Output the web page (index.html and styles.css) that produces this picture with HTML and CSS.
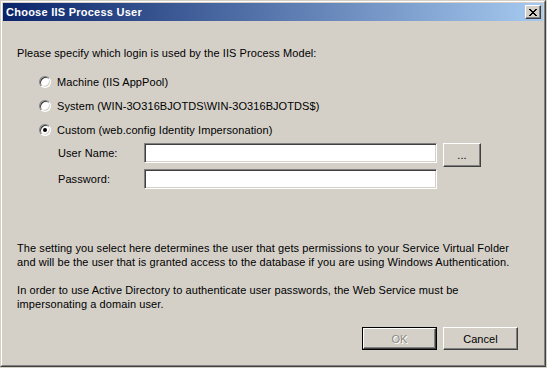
FILE: index.html
```html
<!DOCTYPE html>
<html>
<head>
<meta charset="utf-8">
<title>Choose IIS Process User</title>
<link rel="stylesheet" href="styles.css">
</head>
<body>
<div class="window">
  <div class="frame">
    <div class="titlebar">
      <span class="title">Choose IIS Process User</span>
      <button class="close" type="button" aria-label="Close">
        <svg width="8" height="7" viewBox="0 0 8 7"><path d="M0 0h2v1h-2zM6 0h2v1h-2zM1 1h2v1h-2zM5 1h2v1h-2zM2 2h4v1h-4zM3 3h2v1h-2zM2 4h4v1h-4zM1 5h2v1h-2zM5 5h2v1h-2zM0 6h2v1h-2zM6 6h2v1h-2z" fill="#000"/></svg>
      </button>
    </div>
    <div class="content">
      <p class="prompt">Please specify which login is used by the IIS Process Model:</p>
      <div class="options">
        <label class="option"><span class="radio"></span><span>Machine (IIS AppPool)</span></label>
        <label class="option"><span class="radio"></span><span>System (WIN-3O316BJOTDS\WIN-3O316BJOTDS$)</span></label>
        <label class="option"><span class="radio checked"></span><span>Custom (web.config Identity Impersonation)</span></label>
      </div>
      <div class="fields">
        <div class="field field-user">
          <span class="field-label">User Name:</span>
          <span class="input"></span>
          <span class="btn btn-browse">...</span>
        </div>
        <div class="field field-pass">
          <span class="field-label">Password:</span>
          <span class="input"></span>
        </div>
      </div>
      <p class="note note-first">The setting you select here determines the user that gets permissions to your Service Virtual Folder<br>and will be the user that is granted access to the database if you are using Windows Authentication.</p>
      <p class="note note-second">In order to use Active Directory to authenticate user passwords, the Web Service must be<br>impersonating a domain user.</p>
      <div class="actions">
        <span class="btn btn-default"><span class="btn-inner disabled">OK</span></span>
        <span class="btn btn-cancel">Cancel</span>
      </div>
    </div>
  </div>
</div>
</body>
</html>
```
FILE: styles.css
```css
* { box-sizing: border-box; }
html, body { margin: 0; padding: 0; background: #d4d0c8; }
body {
  font-family: "Liberation Sans", Arial, sans-serif;
  font-size: 11px;
  letter-spacing: 0.08px;
  color: #000;
}
.window {
  width: 546px;
  height: 367px;
  border: 1px solid;
  border-color: #d4d0c8 #404040 #404040 #d4d0c8;
  background: #d4d0c8;
}
.frame {
  height: 100%;
  border: 1px solid;
  border-color: #fff #808080 #808080 #fff;
  padding: 1px;
  display: flex;
  flex-direction: column;
}
.titlebar {
  height: 18px;
  background: linear-gradient(to right, #0a246a, #a6caf0);
  display: flex;
  align-items: center;
  justify-content: space-between;
  padding: 0 2px 0 3px;
}
.title {
  color: #fff;
  font-weight: bold;
  font-size: 11px;
  font-family: "Liberation Sans", Arial, sans-serif;
  letter-spacing: 0.25px;
}
.close {
  width: 16px;
  height: 14px;
  padding: 0;
  margin: 0;
  background: #d4d0c8;
  border: 1px solid;
  border-color: #fff #404040 #404040 #fff;
  box-shadow: inset -1px -1px 0 #808080;
  display: flex;
  align-items: center;
  justify-content: center;
}
.close svg { display: block; margin-left: -1px; }
.content {
  padding: 0 0 0 14px;
  flex: 1;
}
p { margin: 0; }
.prompt {
  margin-top: 25px;
  line-height: 14px;
}
.options {
  margin-top: 10px;
  padding-left: 22px;
}
.option {
  display: flex;
  align-items: center;
  height: 24px;
  gap: 6px;
}
.radio {
  width: 12px;
  height: 12px;
  border-radius: 50%;
  background: #fff;
  border: 1px solid;
  border-color: #808080 #fff #fff #808080;
  box-shadow: inset 1px 1px 0 #404040, inset -1px -1px 0 #d4d0c8;
  position: relative;
  flex: none;
}
.radio.checked::after {
  content: "";
  position: absolute;
  left: 3px;
  top: 3px;
  width: 4px;
  height: 4px;
  border-radius: 50%;
  background: #000;
}
.fields {
  margin-top: 1px;
  padding-left: 41px;
}
.field {
  display: flex;
  align-items: flex-start;
}
.field-pass { margin-top: 2px; }
.field-label {
  width: 86px;
  line-height: 20px;
}
.input {
  width: 293px;
  height: 20px;
  background: #fff;
  border: 1px solid;
  border-color: #808080 #fff #fff #808080;
  box-shadow: inset 1px 1px 0 #404040, inset -1px -1px 0 #d4d0c8;
}
.btn {
  display: flex;
  align-items: center;
  justify-content: center;
  background: #d4d0c8;
  border: 1px solid;
  border-color: #fff #404040 #404040 #fff;
  box-shadow: inset -1px -1px 0 #808080;
}
.btn-browse {
  width: 38px;
  height: 24px;
  margin-left: 6px;
  padding-bottom: 1px;
}
.note { line-height: 14px; white-space: nowrap; }
.note-first { margin-top: 52px; }
.note-second { margin-top: 14px; }
.actions {
  display: flex;
  justify-content: flex-end;
  gap: 6px;
  margin-top: 16px;
  padding-right: 25px;
}
.btn-default {
  width: 75px;
  height: 23px;
  border: 1px solid #000;
  box-shadow: none;
  padding: 0;
}
.btn-inner {
  width: 100%;
  height: 100%;
  display: flex;
  align-items: center;
  justify-content: center;
  border: 1px solid;
  border-color: #fff #404040 #404040 #fff;
  box-shadow: inset -1px -1px 0 #808080;
}
.disabled {
  color: #8d8a85;
  text-shadow: 1px 1px 0 #fff;
}
.btn-cancel {
  width: 75px;
  height: 23px;
}
```
